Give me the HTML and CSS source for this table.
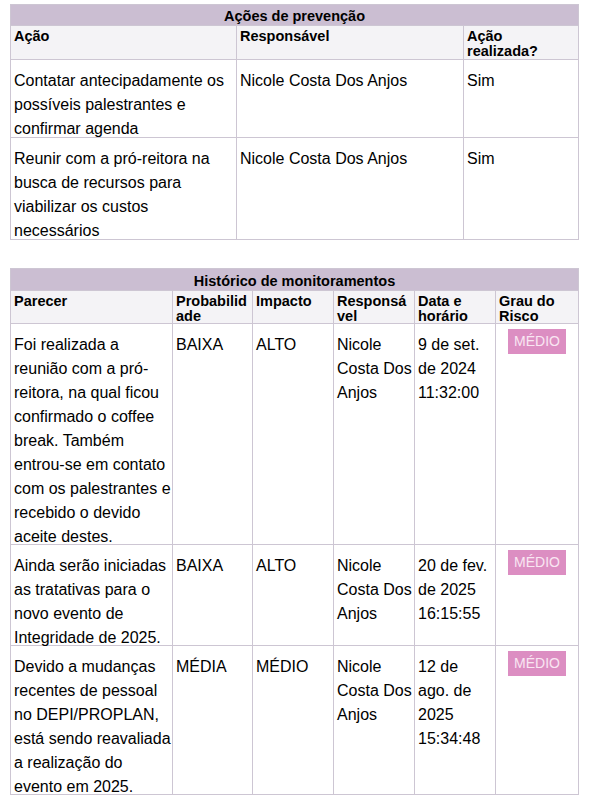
FILE: index.html
```html
<!DOCTYPE html>
<html lang="pt-BR">
<head>
<meta charset="utf-8">
<title>Ações de prevenção</title>
<link rel="stylesheet" href="styles.css">
</head>
<body>
<table class="grid grid-actions">
  <colgroup>
    <col class="c-acao">
    <col class="c-resp">
    <col class="c-real">
  </colgroup>
  <thead>
    <tr class="title"><th colspan="3">Ações de prevenção</th></tr>
    <tr class="head">
      <th>Ação</th>
      <th>Responsável</th>
      <th>Ação<br>realizada?</th>
    </tr>
  </thead>
  <tbody>
    <tr>
      <td><div class="txt">Contatar antecipadamente os<br>possíveis palestrantes e<br>confirmar agenda</div></td>
      <td><div class="txt">Nicole Costa Dos Anjos</div></td>
      <td><div class="txt">Sim</div></td>
    </tr>
    <tr>
      <td><div class="txt">Reunir com a pró-reitora na<br>busca de recursos para<br>viabilizar os custos<br>necessários</div></td>
      <td><div class="txt">Nicole Costa Dos Anjos</div></td>
      <td><div class="txt">Sim</div></td>
    </tr>
  </tbody>
</table>

<table class="grid grid-history">
  <colgroup>
    <col class="c-parecer">
    <col class="c-prob">
    <col class="c-imp">
    <col class="c-resp2">
    <col class="c-data">
    <col class="c-grau">
  </colgroup>
  <thead>
    <tr class="title"><th colspan="6">Histórico de monitoramentos</th></tr>
    <tr class="head">
      <th>Parecer</th>
      <th>Probabilid<wbr>ade</th>
      <th>Impacto</th>
      <th>Responsá<wbr>vel</th>
      <th>Data e horário</th>
      <th>Grau do Risco</th>
    </tr>
  </thead>
  <tbody>
    <tr>
      <td><div class="txt">Foi realizada a<br>reunião com a pró-<br>reitora, na qual ficou<br>confirmado o coffee<br>break. Também<br>entrou-se em contato<br>com os palestrantes e<br>recebido o devido<br>aceite destes.</div></td>
      <td><div class="txt">BAIXA</div></td>
      <td><div class="txt">ALTO</div></td>
      <td><div class="txt">Nicole<br>Costa Dos<br>Anjos</div></td>
      <td><div class="txt">9 de set.<br>de 2024<br>11:32:00</div></td>
      <td class="risk"><span class="badge">MÉDIO</span></td>
    </tr>
    <tr>
      <td><div class="txt">Ainda serão iniciadas<br>as tratativas para o<br>novo evento de<br>Integridade de 2025.</div></td>
      <td><div class="txt">BAIXA</div></td>
      <td><div class="txt">ALTO</div></td>
      <td><div class="txt">Nicole<br>Costa Dos<br>Anjos</div></td>
      <td><div class="txt">20 de fev.<br>de 2025<br>16:15:55</div></td>
      <td class="risk"><span class="badge">MÉDIO</span></td>
    </tr>
    <tr>
      <td><div class="txt">Devido a mudanças<br>recentes de pessoal<br>no DEPI/PROPLAN,<br>está sendo reavaliada<br>a realização do<br>evento em 2025.</div></td>
      <td><div class="txt">MÉDIA</div></td>
      <td><div class="txt">MÉDIO</div></td>
      <td><div class="txt">Nicole<br>Costa Dos<br>Anjos</div></td>
      <td><div class="txt">12 de<br>ago. de<br>2025<br>15:34:48</div></td>
      <td class="risk"><span class="badge">MÉDIO</span></td>
    </tr>
  </tbody>
</table>
</body>
</html>
```

FILE: styles.css
```css
html, body {
  background: #ffffff;
}

body {
  margin: 0;
  padding: 4px 0 0 10px;
  font-family: "Liberation Sans", Arial, sans-serif;
  color: #000000;
}

.grid {
  border-collapse: collapse;
  table-layout: fixed;
  width: 568px;
}

.grid-actions {
  margin-bottom: 28px;
}

.c-acao { width: 226px; }
.c-resp { width: 227px; }
.c-real { width: 115px; }

.c-parecer { width: 162px; }
.c-prob { width: 80px; }
.c-imp { width: 81px; }
.c-resp2 { width: 81px; }
.c-data { width: 81px; }
.c-grau { width: 83px; }

.grid th,
.grid td {
  border: 1px solid #cdc6d3;
  vertical-align: top;
  text-align: left;
}

.title th {
  background: #cbbed2;
  text-align: center;
  font-size: 14.5px;
  line-height: 15px;
  font-weight: bold;
  padding: 4px 3px 1px;
}

.grid-history .title th {
  padding: 5px 3px 1px;
}

.head th {
  background: #f4f3f6;
  font-size: 14.5px;
  line-height: 15px;
  font-weight: bold;
  padding: 3px 2px 0 3px;
}

.grid-history .head th {
  line-height: 14.5px;
  padding-top: 3px;
}

.grid td {
  font-size: 16px;
  line-height: 24px;
  padding: 9px 0 0 3px;
  white-space: nowrap;
}

.txt {
  margin-bottom: -4px;
}

.grid-history tbody td:first-child .txt {
  margin-bottom: -5px;
}

.grid td.risk {
  padding: 5px 0 0;
  text-align: center;
}

.badge {
  display: inline-block;
  background: #dc8ec2;
  color: #f9e6f2;
  font-size: 14px;
  line-height: 25px;
  padding: 0 6px;
}
```
